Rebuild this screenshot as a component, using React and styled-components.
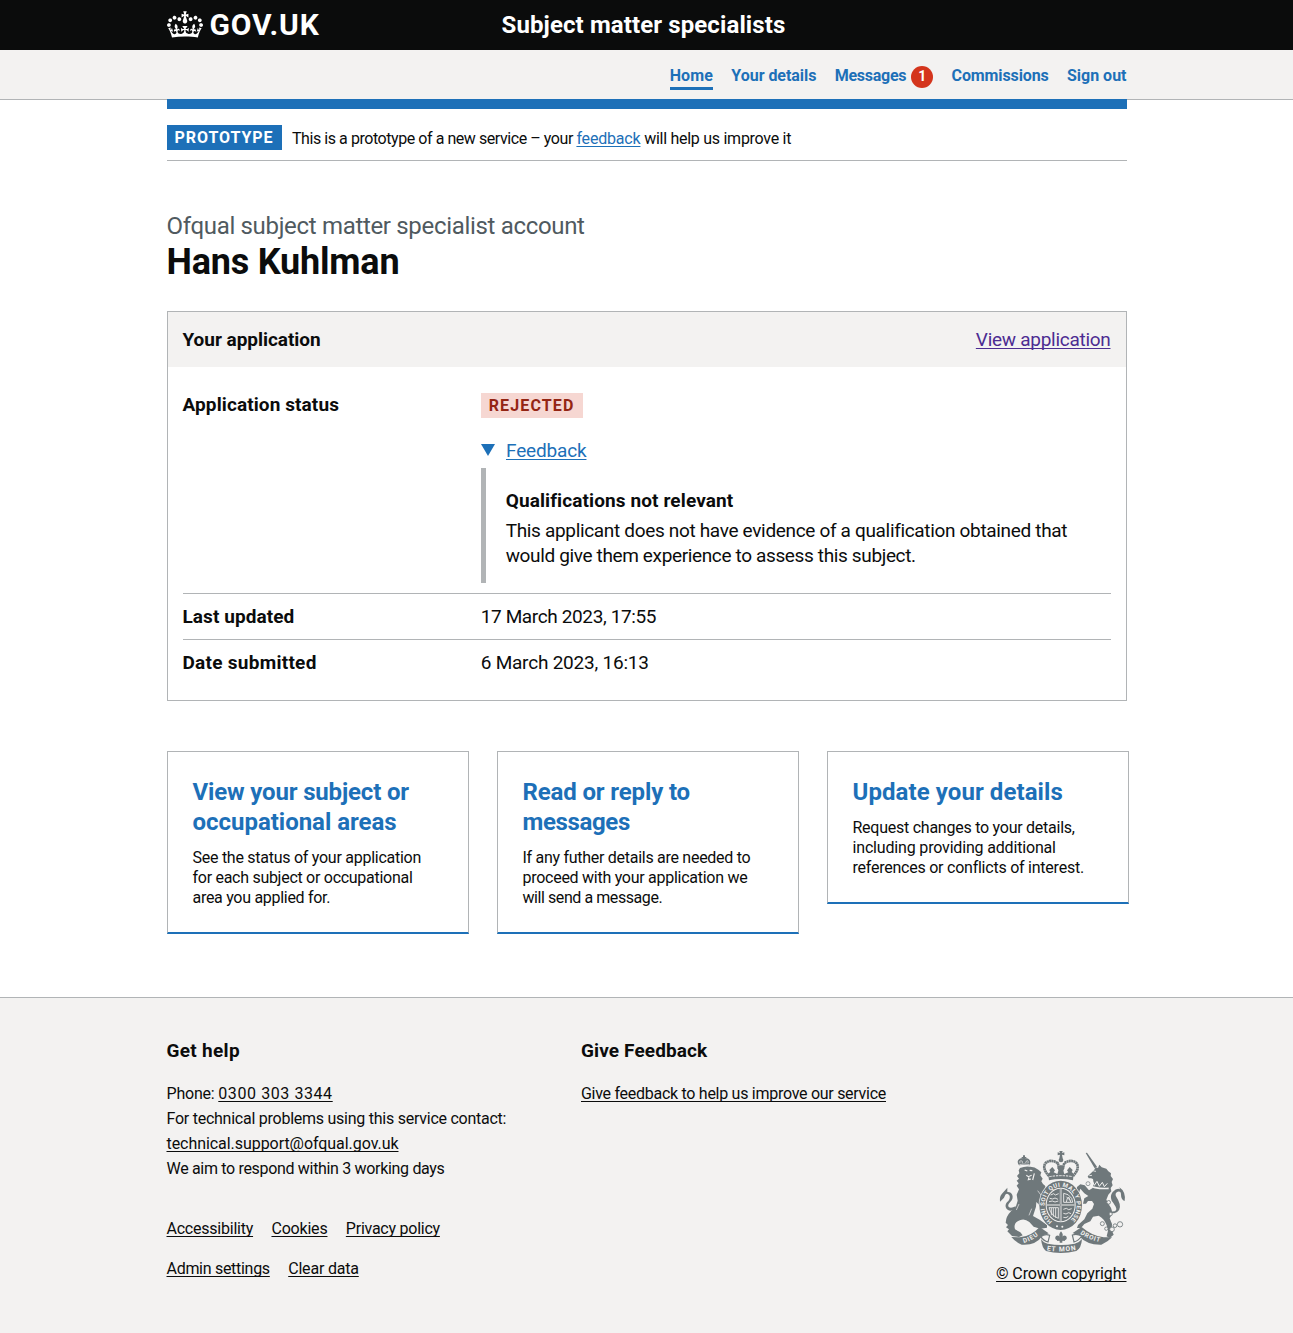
import React from "react";
import styled, { createGlobalStyle, css } from "styled-components";

const ink = "#0b0c0c";
const blue = "#1d70b8";
const rule = "#b1b4b6";
const pale = "#f3f2f1";
const crest = "#6f787b";

const Global = createGlobalStyle`
  *, *::before, *::after { box-sizing: border-box; }
  body { margin: 0; background: #fff; }
  h1, h2, h3, p, dl, dd, dt, ul { margin: 0; padding: 0; font-weight: inherit; }
`;

const tracking = css`
  letter-spacing: ${(p) => p.$track || 0}px;
`;

const Page = styled.div`
  min-height: 1333px;
  display: flex;
  flex-direction: column;
  color: ${ink};
  font-family: Roboto, "Liberation Sans", sans-serif;
  font-size: 16px;
  line-height: 20px;
`;

const Container = styled.div`
  width: 960px;
  margin: 0 auto;
`;

const Header = styled.header`
  height: 50px;
  background: ${ink};
  color: #fff;
`;

const HeaderRow = styled(Container)`
  display: flex;
  align-items: center;
  height: 50px;
`;

const Brand = styled.div`
  display: flex;
  align-items: center;
  gap: 7px;
  width: 335px;
  font-size: 30px;
  line-height: 30px;
  font-weight: 700;
`;

const CrownIcon = styled.svg`
  width: 36px;
  height: 27px;
  margin-top: -2px;
  flex: none;
`;

const BrandName = styled.span`
  letter-spacing: 0.9px;
`;

const ServiceName = styled.span`
  font-size: 24px;
  line-height: 30px;
  font-weight: 700;
  ${tracking}
`;

const NavBar = styled.nav`
  height: 50px;
  background: ${pale};
  border-bottom: 1px solid ${rule};
`;

const NavList = styled(Container)`
  display: flex;
  justify-content: flex-end;
  align-items: flex-start;
  gap: 18.3px;
  padding-top: 16px;
`;

const NavItem = styled.a`
  display: flex;
  padding-bottom: 1px;
  border-bottom: 3px solid ${(p) => (p.$current ? blue : "transparent")};
  color: ${blue};
  font-weight: 700;
  white-space: nowrap;
  ${tracking}
`;

const Badge = styled.span`
  width: 22px;
  height: 22px;
  margin: 0 0 -2px 5px;
  border-radius: 50%;
  background: #d4351c;
  color: #fff;
  font-size: 14px;
  line-height: 21px;
  letter-spacing: 0;
  text-align: center;
`;

const BlueBar = styled(Container)`
  height: 10px;
  margin-top: -1px;
  background: ${blue};
`;

const PhaseBanner = styled(Container)`
  display: flex;
  align-items: center;
  gap: 10.5px;
  height: 52px;
  padding: 6px 0 0;
  border-bottom: 1px solid ${rule};
`;

const PhaseText = styled.p`
  padding-top: 2px;
`;

const Tag = styled.strong`
  display: inline-block;
  padding: 0 8px;
  height: 25px;
  line-height: 25px;
  background: ${(p) => (p.$red ? "#f6d7d2" : blue)};
  color: ${(p) => (p.$red ? "#942514" : "#fff")};
  font-weight: 700;
  ${tracking}
`;

const Span = styled.span`
  ${tracking}
`;

const Link = styled.a`
  color: ${(p) => (p.$visited ? "#4c2c92" : p.$dark ? ink : blue)};
  text-decoration: underline;
  text-decoration-thickness: 1px;
  text-decoration-skip-ink: none;
  text-underline-offset: 2px;
  white-space: nowrap;
  ${tracking}
`;

const Main = styled(Container)`
  padding-top: 50px;
`;

const Caption = styled.span`
  display: block;
  color: #505a5f;
  font-size: 24px;
  line-height: 30px;
  ${tracking}
`;

const Title = styled.h1`
  padding-top: 1px;
  font-size: 36px;
  line-height: 40px;
  font-weight: 700;
  ${tracking}
`;

const SummaryCard = styled.section`
  margin-top: 29px;
  border: 1px solid ${rule};
  font-size: 19px;
  line-height: 25px;
`;

const SummaryHead = styled.div`
  display: flex;
  justify-content: space-between;
  padding: 15px;
  background: ${pale};
`;

const Strong = styled.h2`
  font-size: 19px;
  line-height: 25px;
  font-weight: 700;
  ${tracking}
`;

const SummaryList = styled.dl`
  padding: 15px;
`;

const SummaryRow = styled.div`
  display: grid;
  grid-template-columns: 298.2px 1fr;
  padding: 10px 0;
  border-bottom: ${(p) => (p.$last ? 0 : 1)}px solid ${rule};
`;

const Key = styled.dt`
  font-weight: 700;
  ${tracking}
`;

const Value = styled.dd`
  ${tracking}
`;

const StatusTag = styled(Tag)`
  display: block;
  width: max-content;
  margin-top: 1px;
  font-size: 16px;
`;

const Toggle = styled.div`
  display: flex;
  margin-top: 20px;
`;

const Arrow = styled.span`
  width: 0;
  height: 0;
  margin: 6px 11.3px 0 0;
  border: 7px solid transparent;
  border-top: 12px solid ${blue};
  border-bottom: 0;
`;

const Details = styled.div`
  margin-top: 5px;
  padding: 20px 0 15px 20px;
  border-left: 5px solid ${rule};
`;

const DetailsText = styled.p`
  margin-top: 5px;
`;

const Line = styled.span`
  display: block;
  white-space: nowrap;
  ${tracking}
`;

const Cards = styled.div`
  display: grid;
  grid-template-columns: repeat(3, 302px);
  column-gap: 28px;
  align-items: start;
  margin: 50px -2px 0 0;
`;

const Card = styled.article`
  padding: 25px 25px 24px;
  border: 1px solid ${rule};
  border-bottom: 2px solid ${blue};
`;

const CardTitle = styled.h3`
  margin-bottom: 11px;
  color: ${blue};
  font-size: 24px;
  line-height: 30px;
  font-weight: 700;
`;

const Footer = styled.footer`
  flex: 1;
  margin-top: 63px;
  padding-top: 40px;
  background: ${pale};
  border-top: 1px solid ${rule};
`;

const HelpColumns = styled(Container)`
  display: grid;
  grid-template-columns: 414.5px 1fr;
`;

const HelpText = styled.div`
  margin-top: 18px;
  line-height: 25px;
`;

const FooterMeta = styled(Container)`
  display: flex;
  justify-content: space-between;
`;

const FooterLinks = styled.div`
  display: flex;
  flex-direction: column;
  gap: 15px;
  padding-top: 35px;
  line-height: 25px;
`;

const LinkRow = styled.div`
  display: flex;
  gap: 18.4px;
`;

const Copyright = styled.div`
  display: flex;
  flex-direction: column;
  align-items: flex-end;
  gap: 10px;
  margin-top: -31px;
`;

const ArmsImage = styled.svg`
  width: 129px;
  height: 104px;
`;

function Crown() {
  return (
    <CrownIcon viewBox="0 0 132 97" fill="#fff" aria-hidden="true">
      <path
        fillRule="evenodd"
        d="M25 30.2c3.5 1.5 7.7-.2 9.1-3.7 1.5-3.6-.2-7.8-3.9-9.2-3.6-1.4-7.6.3-9.1 3.9-1.4 3.5.3 7.5 3.9 9zM9 39.5c3.6 1.5 7.8-.2 9.2-3.7 1.5-3.6-.2-7.8-3.9-9.1-3.6-1.5-7.6.2-9.1 3.8-1.4 3.5.3 7.5 3.8 9zM4.4 57.2c3.5 1.5 7.7-.2 9.1-3.8 1.5-3.6-.2-7.7-3.9-9.1-3.5-1.5-7.6.3-9.1 3.8-1.4 3.5.3 7.6 3.9 9.1zm38.3-21.4c3.5 1.5 7.7-.2 9.1-3.8 1.5-3.6-.2-7.7-3.9-9.1-3.6-1.5-7.6.3-9.1 3.8-1.3 3.6.4 7.7 3.9 9.1zm64.4-5.6c-3.6 1.5-7.8-.2-9.1-3.7-1.5-3.6.2-7.8 3.8-9.2 3.6-1.4 7.7.3 9.2 3.9 1.3 3.5-.4 7.5-3.9 9zm15.9 9.3c-3.6 1.5-7.7-.2-9.1-3.7-1.5-3.6.2-7.8 3.7-9.1 3.6-1.5 7.7.2 9.2 3.8 1.5 3.5-.3 7.5-3.8 9zm4.7 17.7c-3.6 1.5-7.8-.2-9.2-3.8-1.5-3.6.2-7.7 3.9-9.1 3.6-1.5 7.7.3 9.2 3.8 1.3 3.5-.4 7.6-3.9 9.1zM89.3 35.8c-3.6 1.5-7.8-.2-9.2-3.8-1.4-3.6.2-7.7 3.9-9.1 3.6-1.5 7.7.3 9.2 3.8 1.4 3.6-.3 7.7-3.9 9.1zM69.7 17.7l8.9 4.7V9.3l-8.9 2.8c-.2-.3-.5-.6-.9-.9L72.4 0H59.6l3.5 11.2c-.3.3-.6.5-.9.9l-8.8-2.8v13.1l8.8-4.7c.3.3.6.7.9.9l-5 15.4v.1c-.2.8-.4 1.6-.4 2.4 0 4.1 3.1 7.5 7 8.1h.2c.3 0 .7.1 1 .1.4 0 .7 0 1-.1h.2c4-.6 7.1-4.1 7.1-8.1 0-.8-.1-1.7-.4-2.4V34l-5.1-15.4c.4-.2.7-.6 1-.9zM66 92.8c16.9 0 32.8 1.1 47.1 3.2 4-16.9 8.9-26.7 14-33.5l-9.6-3.4c1 4.9 1.1 7.2 0 10.2-1.5-1.4-3-4.3-4.2-8.7L108.6 76c2.8-2 5-3.2 7.5-3.3-4.4 9.4-10 11.9-13.6 11.2-4.3-.8-6.3-4.6-5.6-7.9 1-4.7 5.7-5.9 8-.5 4.3-8.7-3-11.4-7.6-8.8 7.1-7.2 7.9-13.5 2.1-21.1-8 6.1-8.1 12.3-4.5 20.8-4.7-5.4-12.1-2.5-9.5 6.2 3.4-5.2 7.9-2 7.2 3.1-.6 4.3-6.4 7.8-13.5 7.2-10.3-.9-10.9-8-11.2-13.8 2.5-.5 7.1 1.8 11 7.3L80.2 60c-4.1 4.4-8 5.3-12.3 5.4 1.4-4.4 8-11.6 8-11.6H55.5s6.4 7.2 7.9 11.6c-4.2-.1-8-1-12.3-5.4l1.4 16.4c3.9-5.5 8.5-7.7 10.9-7.3-.3 5.8-.9 12.8-11.1 13.8-7.2.6-12.9-2.9-13.5-7.2-.7-5 3.8-8.3 7.1-3.1 2.7-8.7-4.6-11.6-9.4-6.2 3.7-8.5 3.6-14.7-4.6-20.8-5.8 7.6-5 13.9 2.2 21.1-4.7-2.6-11.9.1-7.7 8.8 2.3-5.5 7.1-4.2 8.1.5.7 3.3-1.3 7.1-5.7 7.9-3.5.7-9-1.8-13.5-11.2 2.5.1 4.7 1.3 7.5 3.3l-4.7-15.4c-1.2 4.4-2.7 7.2-4.3 8.7-1.1-3-.9-5.3 0-10.2l-9.5 3.4c5 6.9 9.9 16.7 14 33.5 14.8-2.1 30.8-3.2 47.7-3.2z"
      />
    </CrownIcon>
  );
}

function RoyalArms() {
  return (
    <ArmsImage viewBox="3 6 387 312" fill={crest} aria-hidden="true">
      <defs>
        <path id="garter" d="M166 220a48 56 0 1 1 50 0" />
        <path id="scrollLeft" d="M80 285Q112 277 138 248" />
        <path id="scrollMid" d="M149 307Q192 315 245 304" />
        <path id="scrollRight" d="M249 257Q275 277 325 286" />
      </defs>

      {/* lion */}
      <path d="M66 52q-8-12 0-18 7-6 15 0 8-7 15 0 7 6 2 18-15-4-32 0z" />
      <path d="M78 22h6v5h4v5h-4v6h-6v-6h-4v-5h4z" />
      <path d="M69 46q-3-8 3-8t4 8M86 45q1-7 5-7t2 8M67 50q15-4 31 0" stroke={pale} strokeWidth="2" fill="none" />
      <path d="M69 60Q84 54 98 56 112 55 124 65L133 73 130 82 137 92 133 100 138 108Q148 113 146 125L140 133 147 146Q153 160 151 180L145 194 137 196 133 182 126 170 118 162 117 176 108 204 128 215 150 231 150 239 130 242 110 236 97 222Q80 208 62 220 49 228 54 244L70 253 77 262 66 267 45 264 31 250 36 244 27 238 33 231 26 224Q27 205 42 190L56 178 62 158 59 140 66 124 59 113 65 106 59 98 66 92 60 84 67 76 65 67z" />
      <path d="M83 66l8 3M98 67l8 1M88 82l6 4 10-4M96 88l-2 7 8-2M112 76l-5 20" stroke={pale} strokeWidth="3.5" fill="none" />
      <path d="M122 128l12 16M66 168l-8 18M104 182l-8 20" stroke={pale} strokeWidth="2" />
      <path d="M57 184q-24 11-31-7-2-10 8-18 7-9 3-17-6-8-12-2l-4 9-12 12q-2-16 6-24l16-18 0 13q11-1 15 9 4 11-7 22-9 9-3 15 7 4 20-3z" />

      {/* unicorn */}
      <path d="M266 15l4-1 30 42-7 5z" />
      <path d="M272 85L291 67 296 58 303 60 307 50 314 58 328 62 334 70 342 76 341 84 348 93 344 102 347 112 341 120 343 130 334 140 328 155 336 170Q350 188 342 204L338 211 345 228 344 245 350 260 338 270 329 265 333 248 329 232Q322 212 305 203L288 206 280 220 262 228 252 240 240 240 243 231 262 214 271 196 286 182 291 168 285 159 273 159 267 167 258 167 262 151 274 144 262 136 250 122 246 134 238 131 240 117 250 109 263 112 276 127 286 121 290 108 288 93 282 91 275 91z" />
      <path d="M274 98l4 10 8-9 6 13 8-12 7 15 9-12 6 13 9-10" stroke={pale} strokeWidth="3" fill="none" />
      <path d="M270 110q28 14 65 11" stroke={pale} strokeWidth="5" fill="none" />
      <circle cx="273" cy="107" r="6" fill={pale} stroke={crest} strokeWidth="2" />
      <path d="M289 69l8 1M277 83l8-1" stroke={pale} strokeWidth="2.5" />
      <path d="M340 190q24 3 16-14-6-11-12-18-6-15 3-26 13-13 22-8l-2-6q20 13 16 41-11-4-11-19 0-12-10-9-9 4-5 14 8 12 11 23 5 21-16 28l-12-1z" />
      <g fill={pale} stroke={crest} strokeWidth="2.5">
        <circle cx="335" cy="163" r="5.5" />
        <circle cx="341" cy="198" r="5" />
        <circle cx="316" cy="227" r="6" />
        <circle cx="328" cy="242" r="5" />
        <circle cx="345" cy="244" r="7" />
        <circle cx="354" cy="233" r="5.5" />
        <circle cx="369" cy="229" r="8" />
      </g>

      {/* imperial crown */}
      <path d="M187 9h10l-2 6 7-2v9l-7-2 2 11h-10l2-11-7 2v-9l7 2z" />
      <circle cx="192" cy="36" r="7" />
      <path d="M156 84q-21-22-11-38 14-14 37-1l10 34 10-34q23-13 37 1 10 16-11 38" fill="none" stroke={crest} strokeWidth="8" strokeDasharray="6 1" />
      <path d="M153 77l7-5-3-6 9-9 8 10-4 6 11 5 4-12-5-6 12-10 11 10-5 6 4 12 12-5-4-6 8-10 9 9-3 6 6 5-2 20q-37-8-72 0z" />
      <path d="M157 86q34-6 70 0" stroke={pale} strokeWidth="3" fill="none" strokeDasharray="7 3" />

      {/* garter and shield */}
      <ellipse cx="191" cy="172" rx="66" ry="76" fill={pale} />
      <ellipse cx="191" cy="172" rx="64" ry="74" />
      <ellipse cx="191" cy="171" rx="45" ry="52" fill={pale} />
      <ellipse cx="191" cy="171" rx="42" ry="49" />
      <path d="M191 122v98M149 171h84" stroke={pale} strokeWidth="5" />
      <path d="M191 122v98M149 171h84" stroke={crest} strokeWidth="2" />
      <g stroke={pale} strokeWidth="2.6" fill="none">
        <path d="M161 141l9-4 5 4 10-4M158 151l9 2 7-3 9 4M156 161l10-2 8 3 10-3" />
        <path d="M199 184l9-3 7 4 9-3M199 196l8 2 8-4 7 3M199 208l8 1 7-4" />
        <path d="M200 136q15 1 24 15l3 12h-27zM208 162q2-15 8-14l5 14M208 146l12 12" />
        <path d="M156 179h28v32q-22-8-28-32M163 180v22M169 180v26M176 180v29" />
      </g>
      <text fill={pale} fontFamily="Roboto, sans-serif" fontWeight="700" fontSize="18">
        <textPath href="#garter" textLength="266" lengthAdjust="spacing">HONI SOIT QUI MAL Y PENSE</textPath>
      </text>
      <g fill={pale}>
        <circle cx="180" cy="235" r="3" />
        <circle cx="196" cy="236" r="3" />
      </g>

      {/* scroll */}
      <path d="M43 267l25 1q34-2 60-31l27 19-19 8q-20 29-62 26-19-8-31-23z" />
      <path d="M345 268l-25 0q-35-4-66-31l-27 18 19 9q23 27 67 26 20-8 32-22z" />
      <path d="M131 266q14-10 27-4l-5 20q-13-3-22-16zM254 264q-14-8-28-3l5 21q14-4 23-18z" fill={pale} stroke={crest} strokeWidth="3.5" />
      <path d="M132 273q8 12 20 14 40 8 81 0 14-3 22-14-2 28-17 36-47 12-91 0-12-9-15-36z" />
      <path d="M192 250q9 10 3 19 3-10 12-5 6 8-3 13l-8-1v8h-8v-8l-8 1q-9-5-3-13 9-5 12 5-6-9 3-19z" />
      <path d="M180 277h24" stroke={crest} strokeWidth="3" />
      <g fill={pale} fontFamily="Roboto, sans-serif" fontWeight="700" fontSize="20">
        <text fontSize="19"><textPath href="#scrollLeft" textLength="50">DIEU</textPath></text>
        <text><textPath href="#scrollMid" textLength="88">ET MON</textPath></text>
        <text fontSize="19"><textPath href="#scrollRight" textLength="64">DROIT</textPath></text>
      </g>
    </ArmsImage>
  );
}

const navItems = [
  { label: "Home", track: 0.15, current: true },
  { label: "Your details", track: -0.04 },
  { label: "Messages", track: -0.26, count: 1 },
  { label: "Commissions", track: -0.12 },
  { label: "Sign out", track: 0 },
];

const cards = [
  {
    title: [["View your subject or", -0.16], ["occupational areas", -0.02]],
    text: [["See the status of your application", -0.265], ["for each subject or occupational", -0.28], ["area you applied for.", -0.29]],
  },
  {
    title: [["Read or reply to", -0.14], ["messages", -0.36]],
    text: [["If any futher details are needed to", -0.28], ["proceed with your application we", -0.27], ["will send a message.", -0.43]],
  },
  {
    title: [["Update your details", 0.08]],
    text: [["Request changes to your details,", -0.25], ["including providing additional", -0.17], ["references or conflicts of interest.", -0.236]],
  },
];

const Lines = ({ items }) => items.map(([text, track]) => (
  <Line key={text} $track={track}>{text}</Line>
));

export default function App() {
  return (
    <Page>
      <Global />
      <Header>
        <HeaderRow>
          <Brand>
            <Crown />
            <BrandName>GOV.UK</BrandName>
          </Brand>
          <ServiceName $track={0.11}>Subject matter specialists</ServiceName>
        </HeaderRow>
      </Header>
      <NavBar>
        <NavList>
          {navItems.map((item) => (
            <NavItem key={item.label} $current={item.current} $track={item.track}>
              {item.label}
              {item.count && <Badge>{item.count}</Badge>}
            </NavItem>
          ))}
        </NavList>
      </NavBar>
      <BlueBar />
      <PhaseBanner>
        <Tag $track={0.94}>PROTOTYPE</Tag>
        <PhaseText>
          <Span $track={-0.44}>This is a prototype of a new service – your </Span>
          <Link $track={-0.19}>feedback</Link>
          <Span $track={-0.27}> will help us improve it</Span>
        </PhaseText>
      </PhaseBanner>

      <Main as="main">
        <Caption $track={-0.32}>Ofqual subject matter specialist account</Caption>
        <Title $track={-0.2}>Hans Kuhlman</Title>

        <SummaryCard>
          <SummaryHead>
            <Strong $track={-0.04}>Your application</Strong>
            <Link $visited $track={-0.28}>View application</Link>
          </SummaryHead>
          <SummaryList>
            <SummaryRow>
              <Key $track={0.1}>Application status</Key>
              <Value>
                <StatusTag $red $track={1.14}>REJECTED</StatusTag>
                <Toggle>
                  <Arrow />
                  <Link $track={-0.16}>Feedback</Link>
                </Toggle>
                <Details>
                  <Strong as="h3" $track={0.11}>Qualifications not relevant</Strong>
                  <DetailsText>
                    <Line $track={-0.33}>This applicant does not have evidence of a qualification obtained that</Line>
                    <Line $track={-0.36}>would give them experience to assess this subject.</Line>
                  </DetailsText>
                </Details>
              </Value>
            </SummaryRow>
            <SummaryRow>
              <Key $track={0.07}>Last updated</Key>
              <Value $track={-0.37}>17 March 2023, 17:55</Value>
            </SummaryRow>
            <SummaryRow $last>
              <Key $track={0.27}>Date submitted</Key>
              <Value $track={-0.22}>6 March 2023, 16:13</Value>
            </SummaryRow>
          </SummaryList>
        </SummaryCard>

        <Cards>
          {cards.map((card) => (
            <Card key={card.title[0][0]}>
              <CardTitle><Lines items={card.title} /></CardTitle>
              <p><Lines items={card.text} /></p>
            </Card>
          ))}
        </Cards>
      </Main>

      <Footer>
        <HelpColumns>
          <div>
            <Strong $track={0.3}>Get help</Strong>
            <HelpText>
              <Line><Span $track={-0.2}>Phone: </Span><Link $dark $track={0.58}>0300 303 3344</Link></Line>
              <Line $track={-0.25}>For technical problems using this service contact:</Line>
              <Line><Link $dark $track={-0.055}>technical.support@ofqual.gov.uk</Link></Line>
              <Line $track={-0.32}>We aim to respond within 3 working days</Line>
            </HelpText>
          </div>
          <div>
            <Strong $track={0.12}>Give Feedback</Strong>
            <HelpText>
              <Link $dark $track={-0.277}>Give feedback to help us improve our service</Link>
            </HelpText>
          </div>
        </HelpColumns>
        <FooterMeta>
          <FooterLinks>
            <LinkRow>
              <Link $dark $track={-0.23}>Accessibility</Link>
              <Link $dark $track={-0.2}>Cookies</Link>
              <Link $dark $track={-0.25}>Privacy policy</Link>
            </LinkRow>
            <LinkRow>
              <Link $dark $track={-0.29}>Admin settings</Link>
              <Link $dark $track={-0.2}>Clear data</Link>
            </LinkRow>
          </FooterLinks>
          <Copyright>
            <RoyalArms />
            <Link $dark $track={-0.12}>© Crown copyright</Link>
          </Copyright>
        </FooterMeta>
      </Footer>
    </Page>
  );
}
